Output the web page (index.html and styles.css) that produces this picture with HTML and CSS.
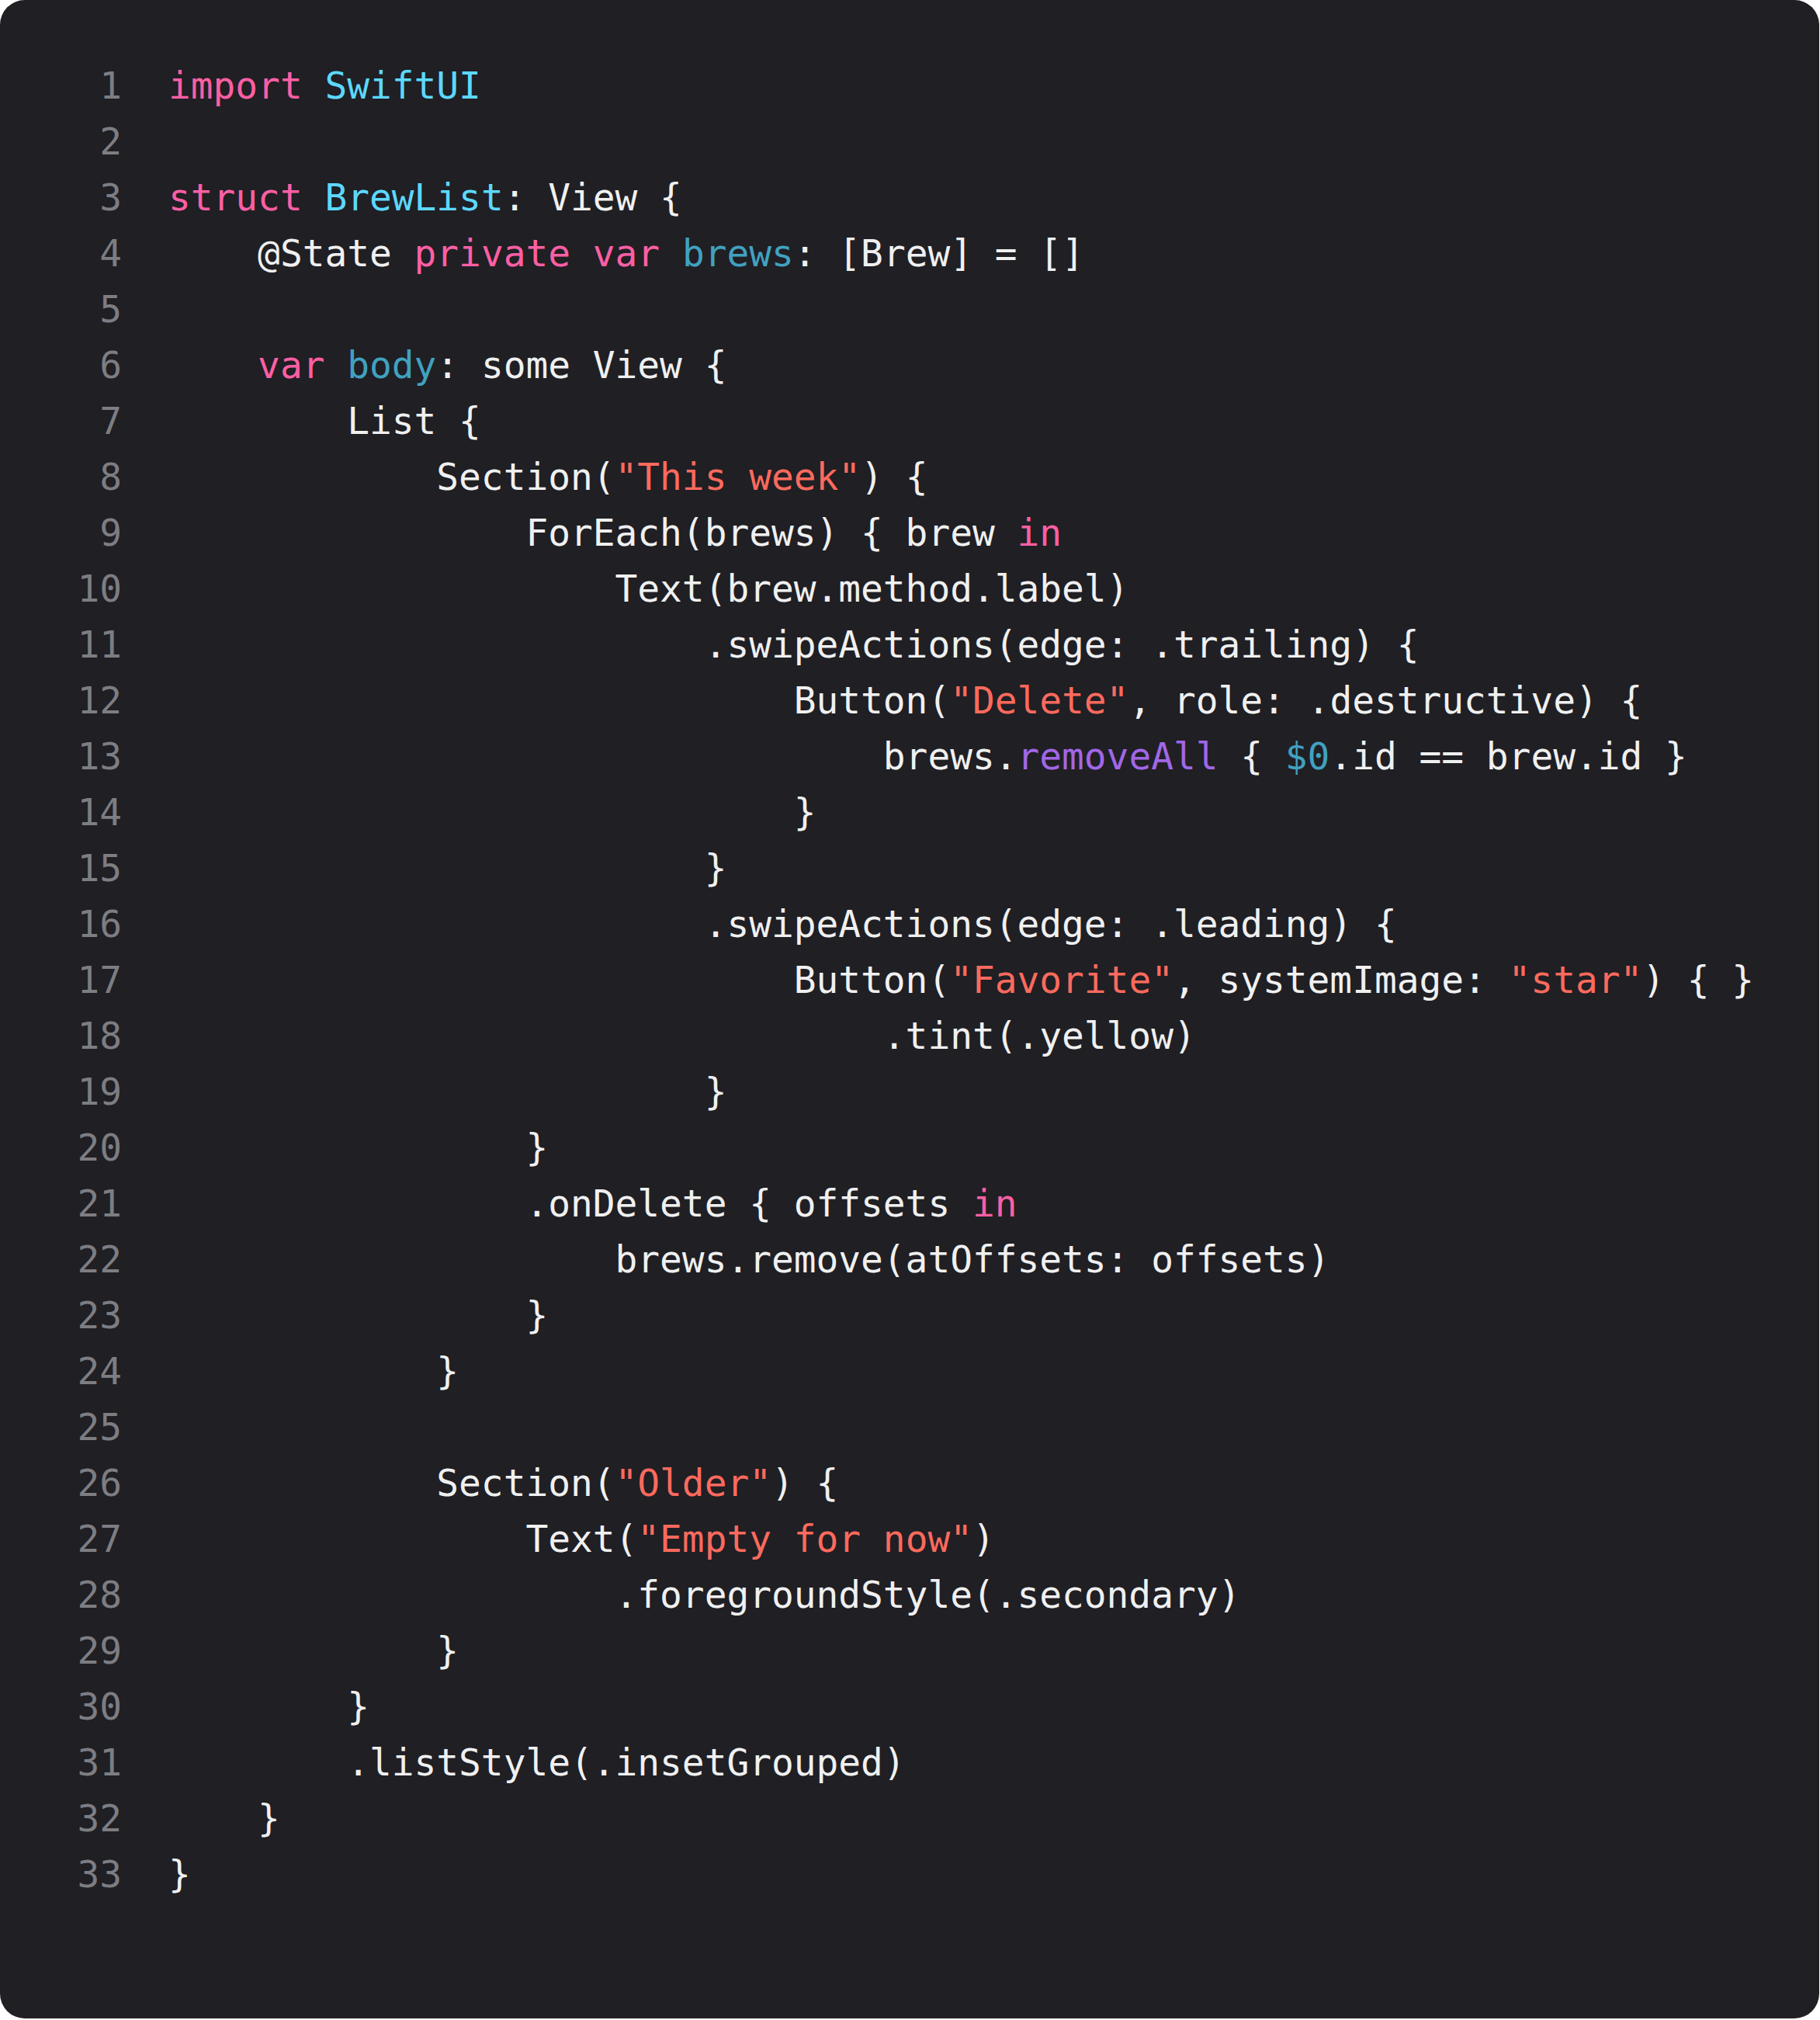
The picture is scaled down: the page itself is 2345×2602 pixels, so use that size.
FILE: index.html
```html
<!DOCTYPE html>
<html lang="en">
<head>
<meta charset="utf-8">
<title>BrewList.swift</title>
<link rel="stylesheet" href="styles.css">
</head>
<body>
<div class="card">
<div class="code">
<div class="line"><span class="ln">1</span><span class="src"><span class="kw">import</span> <span class="ty">SwiftUI</span></span></div>
<div class="line"><span class="ln">2</span><span class="src"></span></div>
<div class="line"><span class="ln">3</span><span class="src"><span class="kw">struct</span> <span class="ty">BrewList</span>: View {</span></div>
<div class="line"><span class="ln">4</span><span class="src">    @State <span class="kw">private</span> <span class="kw">var</span> <span class="dc">brews</span>: [Brew] = []</span></div>
<div class="line"><span class="ln">5</span><span class="src"></span></div>
<div class="line"><span class="ln">6</span><span class="src">    <span class="kw">var</span> <span class="dc">body</span>: some View {</span></div>
<div class="line"><span class="ln">7</span><span class="src">        List {</span></div>
<div class="line"><span class="ln">8</span><span class="src">            Section(<span class="st">"This week"</span>) {</span></div>
<div class="line"><span class="ln">9</span><span class="src">                ForEach(brews) { brew <span class="kw">in</span></span></div>
<div class="line"><span class="ln">10</span><span class="src">                    Text(brew.method.label)</span></div>
<div class="line"><span class="ln">11</span><span class="src">                        .swipeActions(edge: .trailing) {</span></div>
<div class="line"><span class="ln">12</span><span class="src">                            Button(<span class="st">"Delete"</span>, role: .destructive) {</span></div>
<div class="line"><span class="ln">13</span><span class="src">                                brews.<span class="fn">removeAll</span> { <span class="dc">$0</span>.id == brew.id }</span></div>
<div class="line"><span class="ln">14</span><span class="src">                            }</span></div>
<div class="line"><span class="ln">15</span><span class="src">                        }</span></div>
<div class="line"><span class="ln">16</span><span class="src">                        .swipeActions(edge: .leading) {</span></div>
<div class="line"><span class="ln">17</span><span class="src">                            Button(<span class="st">"Favorite"</span>, systemImage: <span class="st">"star"</span>) { }</span></div>
<div class="line"><span class="ln">18</span><span class="src">                                .tint(.yellow)</span></div>
<div class="line"><span class="ln">19</span><span class="src">                        }</span></div>
<div class="line"><span class="ln">20</span><span class="src">                }</span></div>
<div class="line"><span class="ln">21</span><span class="src">                .onDelete { offsets <span class="kw">in</span></span></div>
<div class="line"><span class="ln">22</span><span class="src">                    brews.remove(atOffsets: offsets)</span></div>
<div class="line"><span class="ln">23</span><span class="src">                }</span></div>
<div class="line"><span class="ln">24</span><span class="src">            }</span></div>
<div class="line"><span class="ln">25</span><span class="src"></span></div>
<div class="line"><span class="ln">26</span><span class="src">            Section(<span class="st">"Older"</span>) {</span></div>
<div class="line"><span class="ln">27</span><span class="src">                Text(<span class="st">"Empty for now"</span>)</span></div>
<div class="line"><span class="ln">28</span><span class="src">                    .foregroundStyle(.secondary)</span></div>
<div class="line"><span class="ln">29</span><span class="src">            }</span></div>
<div class="line"><span class="ln">30</span><span class="src">        }</span></div>
<div class="line"><span class="ln">31</span><span class="src">        .listStyle(.insetGrouped)</span></div>
<div class="line"><span class="ln">32</span><span class="src">    }</span></div>
<div class="line"><span class="ln">33</span><span class="src">}</span></div>
</div>
</div>
</body>
</html>
```
FILE: styles.css
```css
html, body {
  margin: 0;
  padding: 0;
  background: #ffffff;
}

.card {
  box-sizing: border-box;
  width: 2344px;
  height: 2600px;
  background: #1f1f24;
  border-radius: 32px;
  padding: 75px 0 0 99px;
}

.code {
  display: flex;
  flex-direction: column;
  font-family: "DejaVu Sans Mono", "Liberation Mono", monospace;
  font-size: 47.8px;
  line-height: 72px;
  color: #f0f0f0;
}

.line {
  display: grid;
  grid-template-columns: 58px 1fr;
  column-gap: 60px;
  height: 72px;
}

.ln {
  text-align: right;
  color: #7d7d82;
}

.src {
  white-space: pre;
}

.kw { color: #fc5fa3; }
.ty { color: #5dd8ff; }
.dc { color: #41a1c0; }
.st { color: #fc6a5d; }
.fn { color: #a167e6; }
```
